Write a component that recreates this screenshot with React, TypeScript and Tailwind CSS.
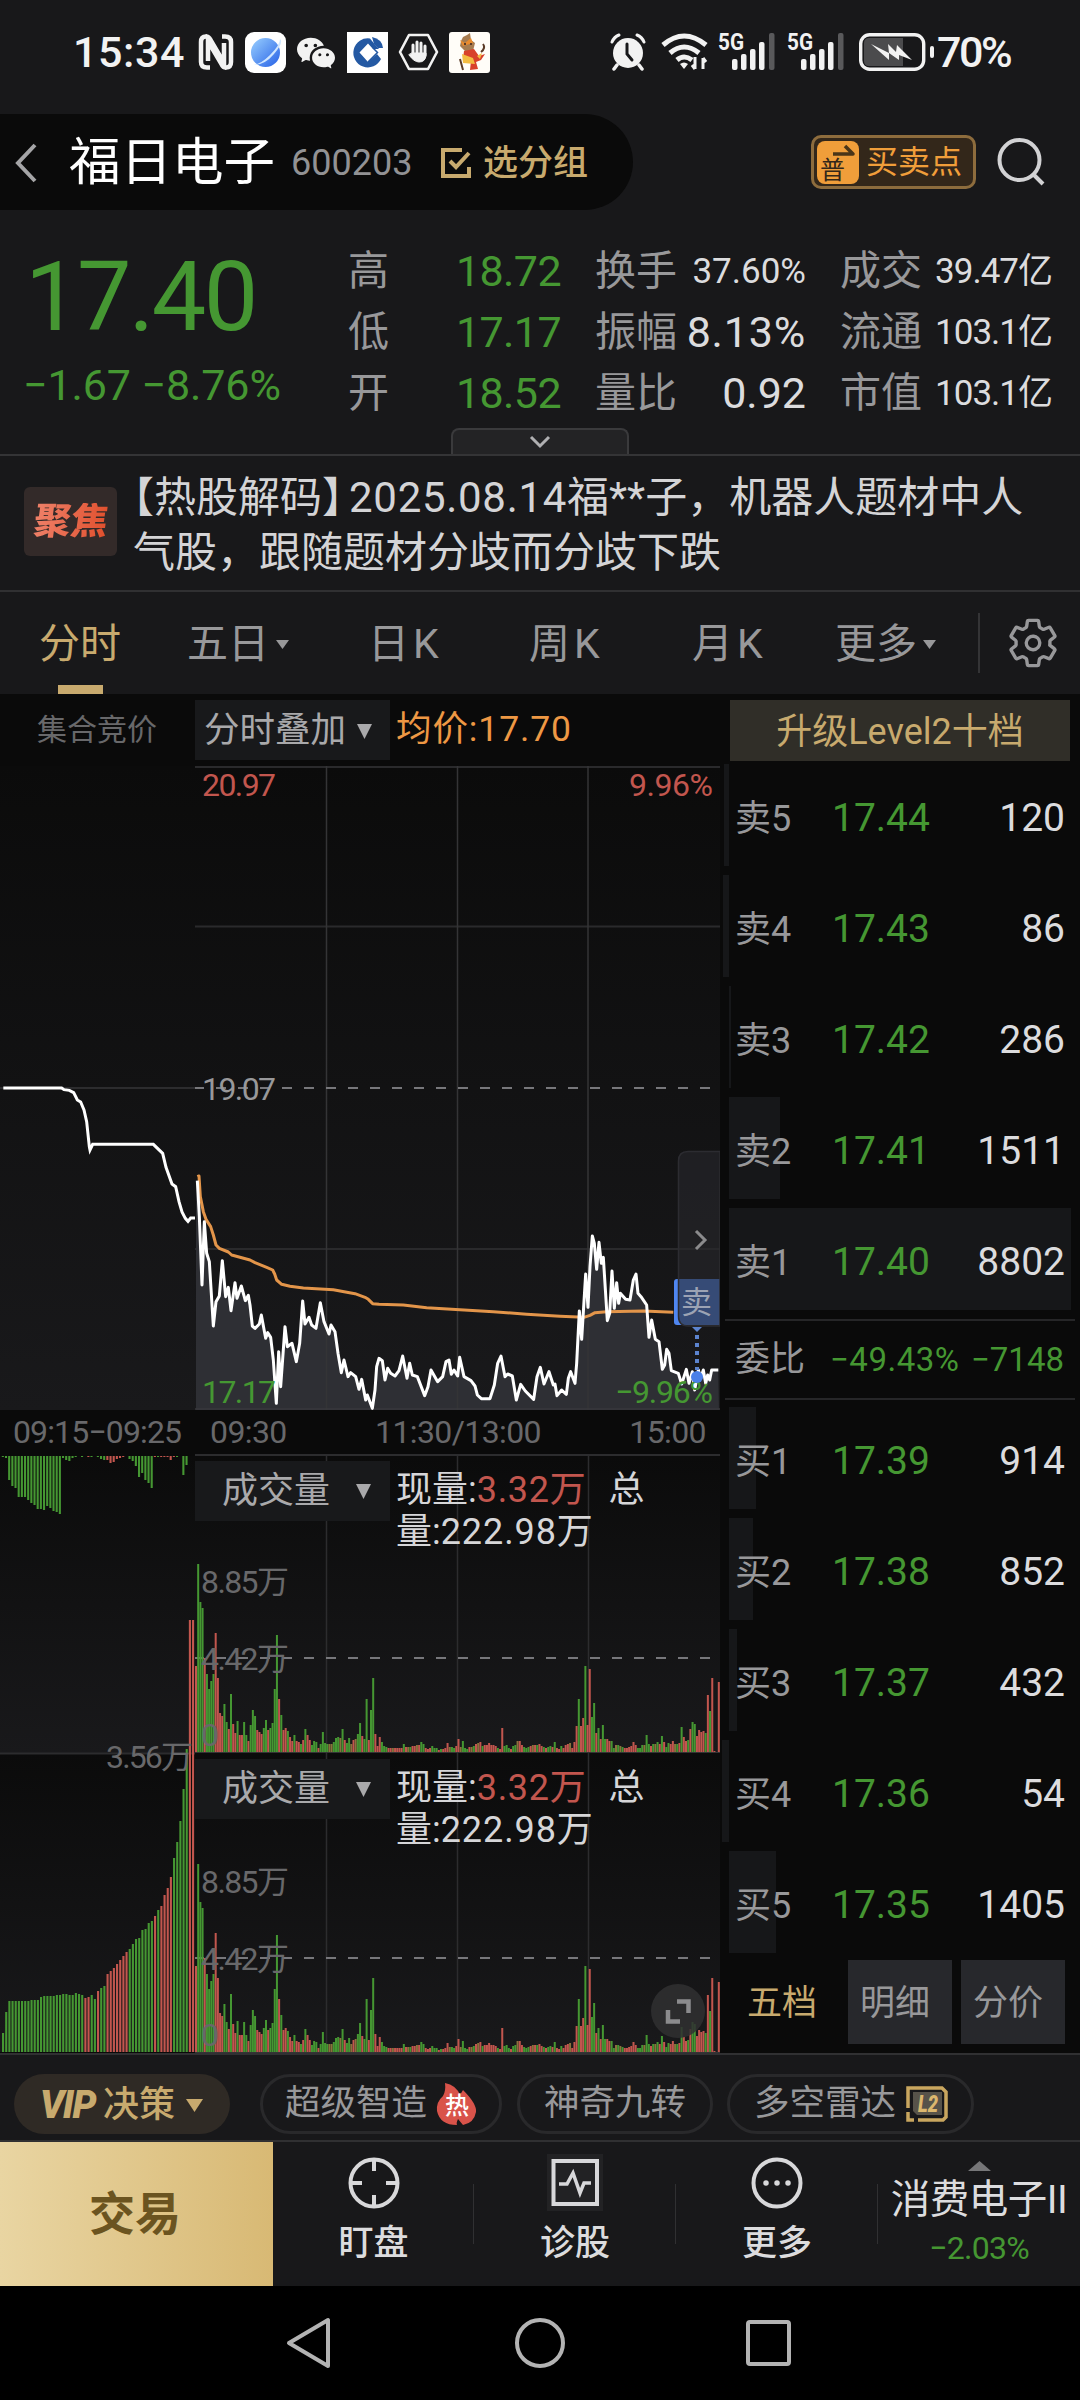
import { BsWechat } from 'react-icons/bs';
import { IoSettingsOutline } from 'react-icons/io5';

const GREEN = '#459732';
const RED = '#c2564e';

// one-minute volume bars, height + colour
const minuteBars = `86r 188g 150g 144g 94r 78g 63g 71g 78g 119r 74r 39r 36r 48g 30g 23r 58g 28r 19r 31g 17r 17r 30g 17g 11r
27g 42g 36g 22r 20r 18r 24g 32g 22r 24g 29g 63g 117g 53r 37g 22r 24r 21g 15r 11r 17g 11r 10r 8g 12r 23g 17r 12r 7g 11g 10g 4r 8g 20g 9g
8g 8m 8m 10g 14g 15g 14m 23g 12r 9g 14g 8m 12r 13m 18g 29g 16r 13g 53g 12r 42g 74g 18r 6r 15r
10g 6g 5g 4r 4r 4m 4r 4r 4r 4r 8g 5r 5m 5g 6r 6r 7m 7r 10g 8g 4r 3r 4r 6g 4g 4g 2r 3g 3r 4r 9r
5m 5g 4g 6r 13r 5m 11g 4g 3g 5r 5m 6g 8r 9m 10r 6g 7r 7r 9r 7r 7r 6r 4g 3r 24r 6g 7g 4g 3r 6g 7g 11m
11r 7r 5g 4g 5g 6r 7m 7r 7g 8r 6r 5g 4r 5g 6g 5r 10g 4r 3r 6g 4r 7r 8r 9m 4r 10r 26r 53g 26r 34r
86g 27r 83r 35g 49g 19r 24g 13r 27g 13g 13r 11r 11g 4g 7m 7g 6m 5g 4r 4r 5r 6r 10r 7r 4g 4g 7g 7m 17g
8g 6r 8g 8m 10g 8r 16g 10r 5g 9g 8r 11r 8m 8g 9r 25g 15r 11r 12g 23r 30g 28g 16r 22r 20r 21r 19g 57r 41g 74r 1r 0r 70r`;

const auctionBars = `19g 40g 51g 51g 51g 51g 51g 51g 51g 52g 52g 52g 55g 56g 56g 56g 56g 57g 57g 58g 58g 57g 57g 59g 58g 57g
54r 55r 57g 53g 61r 64g 66g 78r 81r 84r 88r 92r 96r 100r 103g 108g 113g 114g 122g 123g 129g 131g 136r 142g 146r 157r 164r 175r
194g 210g 231g 263g 303g 432r 432r`;

const auctionUnmatched = `1g 2g 24g 30g 32g 41g 41g 41g 44g 47g 49g 53g 53g 54g 50g 52g 55g 56g 58g 2g 4g 5g 2g 1g 0g 1g 0g 1r 1g
0g 1g 3g 4g 4r 7r 6r 3r 2r 1r 0r 3g 5g 10g 21g 17g 24g 27g 32g 1r 1g 1r 1r 1r 4r 1r 1g 0g 19g 9g`;

// coordinates are thirds of a pixel
const auctionLine =
  '10,114 185,114 192,119 208,121 221,128 232,150 242,156 252,180 260,215 268,290 270,300 278,283 460,283 488,310 498,352 516,402 527,410 537,455 546,486 556,505 564,514 572,504 590,504';

const priceLine = `592,392 598,500 606,705 613,515 620,610 628,635 640,828 648,755 658,738 667,632 677,740 685,712 693,782
705,698 711,745 724,708 736,752 745,736 750,765 757,828 765,835 778,822 784,795 797,865 803,848 812,862 820,930 829,1060
836,905 842,1010 855,830 862,890 876,880 889,935 899,880 908,753 915,822 927,802 935,825 948,835 961,758 972,815 987,852
993,825 1005,845 1014,910 1024,968 1032,930 1044,980 1052,968 1067,980 1077,1018 1085,988 1097,1050 1102,1035 1117,1075
1125,1020 1130,950 1137,925 1147,932 1155,990 1163,955 1172,970 1185,978 1197,962 1208,918 1221,985 1229,940 1237,975
1252,980 1274,1037 1284,1010 1293,960 1313,995 1328,980 1338,935 1347,930 1354,973 1362,960 1373,978 1379,922 1392,980
1413,992 1425,1008 1432,1035 1444,1046 1470,1046 1483,1005 1493,940 1503,918 1515,980 1523,972 1537,978 1549,1050
1562,1003 1576,1023 1601,1048 1611,980 1621,952 1632,1002 1647,965 1660,1005 1665,1002 1671,1037 1685,1020 1699,1033
1705,985 1712,965 1725,1000 1730,940 1738,783 1745,868 1757,672 1764,772 1770,650 1777,558 1783,580 1790,658 1797,577
1804,640 1810,622 1822,812 1829,790 1836,663 1843,775 1850,698 1856,760 1861,730 1877,748 1890,750 1900,690 1908,672
1914,730 1923,740 1940,765 1947,862 1955,810 1966,868 1977,875 1987,958 1994,945 2000,898 2007,910 2014,962 2035,970
2045,1002 2059,958 2067,1000 2077,965 2084,1020 2095,960 2102,985 2110,960 2117,1000 2123,975 2129,990 2135,960 2155,960`;

const averageLine = `592,380 597,378 601,440 610,485 618,508 632,530 640,555 648,585 658,595 685,606 695,615 750,630 765,638
800,652 818,660 824,672 830,690 845,703 870,709 910,714 1000,719 1065,731 1095,742 1105,748 1118,761 1137,763 1210,765
1280,773 1480,785 1580,793 1680,799 1752,802 1770,796 1785,788 1820,785 1930,783 2020,787`;

const stats = [
  { label: '高', value: '18.72', size: 'text-[43px] tracking-[-0.600px]', green: true },
  { label: '换手', value: '37.60%', size: 'text-[35px]' },
  { label: '成交', value: '39.47亿', size: 'text-[35px] tracking-[-1px]' },
  { label: '低', value: '17.17', size: 'text-[43px] tracking-[-0.600px]', green: true },
  { label: '振幅', value: '8.13%', size: 'text-[43px] tracking-[0.800px]' },
  { label: '流通', value: '103.1亿', size: 'text-[35px] tracking-[-1px]' },
  { label: '开', value: '18.52', size: 'text-[43px] tracking-[-0.600px]', green: true },
  { label: '量比', value: '0.92', size: 'text-[43px]' },
  { label: '市值', value: '103.1亿', size: 'text-[35px] tracking-[-1px]' },
];

const sells = [
  { label: '卖5', price: '17.44', qty: '120', left: 4, bar: 5 },
  { label: '卖4', price: '17.43', qty: '86', left: 3, bar: 6 },
  { label: '卖3', price: '17.42', qty: '286', left: 9, bar: 2 },
  { label: '卖2', price: '17.41', qty: '1511', left: 9, bar: 51 },
  { label: '卖1', price: '17.40', qty: '8802', left: 9, bar: 342 },
];

const buys = [
  { label: '买1', price: '17.39', qty: '914', left: 9, bar: 27 },
  { label: '买2', price: '17.38', qty: '852', left: 9, bar: 24 },
  { label: '买3', price: '17.37', qty: '432', left: 9, bar: 8 },
  { label: '买4', price: '17.36', qty: '54', left: 2, bar: 7 },
  { label: '买5', price: '17.35', qty: '1405', left: 9, bar: 47 },
];

function parseBars(data: string) {
  return data.split(/\s+/).map((item) => ({
    h: parseInt(item, 10),
    color: item.endsWith('g') ? GREEN : item.endsWith('r') ? RED : '#8a713c',
  }));
}

function Signal() {
  return (
    <svg width="59" height="48" viewBox="0 -4 59 48" className="shrink-0 overflow-visible">
      <text x="0" y="18" fontSize="23" fontWeight="700" textLength="26" lengthAdjust="spacingAndGlyphs" fill="#f2f2f2">
        5G
      </text>
      <g fill="#f2f2f2">
        <rect x="14" y="27" width="5.5" height="11" rx="2" />
        <rect x="23" y="22" width="5.5" height="16" rx="2" />
        <rect x="32" y="17" width="5.5" height="21" rx="2" />
        <rect x="41" y="10" width="5.5" height="28" rx="2" />
        <rect x="51" y="1" width="5.5" height="37" rx="2" fill="#59595b" />
      </g>
    </svg>
  );
}

function StatusBar() {
  return (
    <div className="flex h-[104px] items-center pr-[66px] pl-[73px] text-[#f2f2f2]">
      <span className="w-[114px] text-[43px] leading-none font-medium tracking-[0.600px]">15:34</span>
      <svg width="36" height="36" viewBox="0 0 36 36" className="ml-[11px]" fill="none" stroke="#f2f2f2">
        <path d="M12 33.500H9Q3 33.500 3 28V8Q3 2.500 8 2.500Q11 2.500 12.500 6L26 29V9" strokeWidth="4.500" />
        <path d="M24 2.500H27Q33 2.500 33 8V28Q33 33.500 28 33.500Q25 33.500 23.500 30L10 7V27" strokeWidth="4.500" />
      </svg>
      <svg width="41" height="41" viewBox="0 0 41 41" className="ml-[11px]">
        <defs>
          <linearGradient id="globe" x1="0" y1="0" x2="1" y2="1">
            <stop offset="0" stopColor="#9ad0ff" />
            <stop offset="1" stopColor="#2560e6" />
          </linearGradient>
        </defs>
        <rect width="41" height="41" rx="9" fill="#fff" />
        <circle cx="20.500" cy="20.500" r="14.500" fill="url(#globe)" />
        <path d="M7 33Q15 33 25 23T35 7Q39 10 29 22T7 33Z" fill="#cfe6ff" />
      </svg>
      <BsWechat size={38} className="ml-[11px]" />
      <svg width="41" height="41" viewBox="0 0 41 41" className="ml-[12px]">
        <path fill="#fff" d="M0 0h41v41H0z" />
        <path d="M23 6.500A14.500 14.500 0 1 0 34 27L30 22L21 30L12.500 20.500L21 11.500L26 17H32Q28 13 23 6.500Z" fill="#2459a3" />
        <path d="M21 30L30.500 20.500L26 16" fill="none" stroke="#2459a3" strokeWidth="1.500" />
        <path d="M25 5L27 12L31 16H36Q35 7 25 5Z" fill="#2459a3" />
      </svg>
      <svg width="41" height="38" viewBox="0 0 41 38" className="ml-[10px]" fill="none" stroke="#f2f2f2" strokeLinecap="round">
        <path d="M11 2H30L39 19L30 36H11L2 19Z" strokeWidth="2.600" strokeLinejoin="round" />
        <path d="M15 22V12M19 20V9M23 20V10M27 22V13" strokeWidth="3" />
        <path d="M14 20H28V23Q27 29 21 29Q16 29 11 22Z" fill="#f2f2f2" strokeWidth="1" />
      </svg>
      <svg width="41" height="41" viewBox="0 0 41 41" className="ml-[10px]">
        <rect width="41" height="41" rx="3" fill="#fffdf8" />
        <path d="M12 9L14 5L18 3L21 1L22 8L26 11L24 19L17 20L11 14Z" fill="#a77c50" />
        <path d="M11 8L16 11L22 6L24 11L14 14Z" fill="#e98b2e" />
        <path d="M15 19L25 17L30 24L36 22L32 28L27 30L29 37L21 38L22 29L14 27Z" fill="#d8412b" />
        <path d="M13 22L24 26L26 32L14 31ZM28 24L33 21L31 27Z" fill="#f3bc42" />
        <path d="M11 27L14 38M34 12Q37 16 32 20M15 12h2M21 12h2" stroke="#5b3b27" strokeWidth="2" fill="none" />
      </svg>

      <svg width="38" height="38" viewBox="0 0 38 38" className="ml-auto" fill="none" stroke="#f2f2f2" strokeLinecap="round">
        <circle cx="19" cy="20" r="15" fill="#f2f2f2" stroke="none" />
        <path d="M3 9Q5 4 10 2M35 9Q33 4 28 2" strokeWidth="3" />
        <path d="M8 32L5 36M30 32L33 36" strokeWidth="3.500" />
        <path d="M18 11V21L23 27" stroke="#18181a" strokeWidth="3" />
      </svg>
      <svg width="48" height="38" viewBox="0 0 48 38" className="ml-[14px]" fill="none" stroke="#f2f2f2" strokeWidth="5">
        <path d="M2 12Q23 -6 45 12" />
        <path d="M9 20Q23 8 38 20" />
        <path d="M16 27Q23 21 31 27" />
        <path d="M19 31Q23 28 27 31L23 36Z" fill="#f2f2f2" stroke="none" />
        <path d="M34 36V24M34 36L31 32M42 25V36M42 25L45 29" strokeWidth="3" />
      </svg>
      <div className="ml-[9px]">
        <Signal />
      </div>
      <div className="ml-[10px]">
        <Signal />
      </div>
      <svg width="76" height="38" viewBox="0 0 76 38" className="ml-[13px]">
        <rect x="1.700" y="1.700" width="63" height="34.600" rx="9" fill="none" stroke="#f2f2f2" strokeWidth="3.400" />
        <path d="M10 5H44V33H10Q5 33 5 28V10Q5 5 10 5Z" fill="#4b4b4d" />
        <path d="M12 11L30 20L29 11L37 19L38 12L53 27L40 22V27L30 20V27Z" fill="#f2f2f2" />
        <rect x="71" y="13" width="4" height="12" rx="2" fill="#f2f2f2" />
      </svg>
      <span className="ml-[2px] w-[77px] text-[43px] leading-none font-medium tracking-[-2.500px]">70%</span>
    </div>
  );
}

function TitleBar() {
  return (
    <div className="mt-[10px] flex h-[96px] items-center">
      <div className="flex h-full w-[633px] items-center rounded-r-full bg-[#0a0a0a] pt-[2px] pl-[15px]">
        <svg width="22" height="40" viewBox="0 0 22 40" fill="none" stroke="#a5a5a7" strokeWidth="4">
          <path d="M20 2L3 20L20 38" />
        </svg>
        <h1 className="ml-[32px] text-[51.500px] leading-none text-white">福日电子</h1>
        <span className="ml-[16px] w-[122px] text-[36px] leading-none text-[#929294]">600203</span>
        <svg width="32" height="32" viewBox="0 0 32 32" className="ml-[27px]" fill="none" stroke="#c8aa6e" strokeWidth="4">
          <path d="M22 3H3V29H29V20" />
          <path d="M10 14L16 20L29 6" />
        </svg>
        <span className="ml-[11px] text-[35px] leading-none font-medium text-[#c8aa6e]">选分组</span>
      </div>
      <div className="ml-auto flex h-[54px] w-[165px] items-center rounded-[10px] border-[3px] border-[#8d6c3d] bg-[#33271a] pl-[3px]">
        <div className="relative h-[43px] w-[42px] rounded-[8px] bg-[#f09e3a] text-[#33271a]">
          <span className="absolute bottom-[1px] left-[3px] text-[25px] leading-none">普</span>
          <svg width="24" height="14" viewBox="0 0 24 14" className="absolute top-[2px] right-[3px]">
            <path d="M1 11H21L13 3" fill="none" stroke="#4a3518" strokeWidth="3.500" strokeLinejoin="round" />
          </svg>
        </div>
        <span className="ml-[7px] text-[32px] leading-none text-[#f09e3a]">买卖点</span>
      </div>
      <svg width="52" height="52" viewBox="0 0 52 52" className="mr-[32px] ml-[20px]" fill="none" stroke="#d2d2d4" strokeWidth="4">
        <circle cx="23.500" cy="24" r="20" />
        <path d="M38 39L47 48" />
      </svg>
    </div>
  );
}

function Quote() {
  return (
    <div className="relative flex h-[246px] border-b-2 border-[#343436]">
      <div className="w-[348px] pl-[25px] text-[#459732]">
        <div className="mt-[39px] text-[97px] leading-[97px] tracking-[-2.600px]">17.40</div>
        <div className="mt-[18px] -ml-[2px] text-[43px] leading-[43px] tracking-[-0.100px] whitespace-nowrap">−1.67 −8.76%</div>
      </div>
      <div className="mt-[31px] grid h-[183px] grid-cols-[213px_211px_212px] gap-x-[34px]">
        {stats.map((s, i) => (
          <div key={i} className="flex h-[61px] items-center justify-between">
            <span className="text-[41px] leading-none whitespace-nowrap text-[#98989a]">{s.label}</span>
            <span className={`leading-none whitespace-nowrap ${s.size} ${s.green ? 'text-[#459732]' : 'text-[#dcdcde]'}`}>
              {s.value}
            </span>
          </div>
        ))}
      </div>
      <div className="absolute bottom-0 left-[451px] flex h-[26px] w-[178px] items-center justify-center rounded-t-[8px] border-2 border-b-0 border-[#3a3a3c] bg-[#232325]">
        <svg width="22" height="14" viewBox="0 0 22 14" fill="none" stroke="#b0b0b2" strokeWidth="3">
          <path d="M2 2L11 11L20 2" />
        </svg>
      </div>
    </div>
  );
}

function News() {
  return (
    <div className="flex h-[136px] border-b-2 border-[#303032]">
      <div className="mt-[31px] ml-[24px] flex h-[69px] w-[93px] items-center justify-center rounded-[6px] bg-[#332a29]">
        <span className="-skew-x-8 bg-linear-to-r from-[#ee8068] to-[#e04f2c] bg-clip-text text-[37px] leading-none font-black text-transparent">
          聚焦
        </span>
      </div>
      <p className="mt-[14px] ml-[16px] text-[42px] leading-[55px] whitespace-nowrap text-[#d4d4d6]">
        <span className="-ml-[21px]">【</span>热股解码<span className="tracking-[-21px]">】</span>
        <span className="ml-[6px] tracking-[0.700px]">2025.08.14</span>福**子，机器人题材中人
        <br />
        气股，跟随题材分歧而分歧下跌
      </p>
    </div>
  );
}

function Tabs() {
  return (
    <div className="flex h-[102px] items-center text-[41px] leading-none text-[#98989a]">
      <div className="relative flex h-full w-[160px] items-center justify-center pt-[2px] text-[#c8aa6e]">
        分时
        <i className="absolute bottom-0 h-[9px] w-[45px] bg-[#c8aa6e]" />
      </div>
      <div className="ml-[27px] flex w-[181px] items-center pt-[2px]">
        五日
        <svg width="13" height="9" className="ml-[7px]">
          <path d="M0 0H13L6.500 9Z" fill="#98989a" />
        </svg>
      </div>
      <span className="w-[161px] pt-[2px] tracking-[4px]">日K</span>
      <span className="w-[163px] pt-[2px] tracking-[4px]">周K</span>
      <span className="w-[143px] pt-[2px] tracking-[4px]">月K</span>
      <div className="flex items-center pt-[2px]">
        更多
        <svg width="13" height="9" className="ml-[6px]">
          <path d="M0 0H13L6.500 9Z" fill="#98989a" />
        </svg>
      </div>
      <div className="ml-auto h-[60px] w-[2px] bg-[#343436]" />
      <IoSettingsOutline size={54} className="mr-[20px] ml-[26px]" />
    </div>
  );
}

function VolumeInfo() {
  return (
    <div className="flex items-start pt-[5px]">
      <div className="flex h-[60px] w-[195px] items-center bg-[#18191b] pl-[27px] text-[36px] leading-none text-[#a9a9ab]">
        成交量
        <svg width="16" height="15" className="ml-[26px]">
          <path d="M0 0H15L7.500 15Z" fill="#a9a9ab" />
        </svg>
      </div>
      <p className="ml-[6px] w-[262px] pt-[8px] text-[36px] leading-[42px] text-[#d6d6d8]">
        现量:<span className="tracking-[0.700px] text-[#c2564e]">3.32万</span>
        <span className="ml-[22px]">总</span>
        <br />
        量:<span className="tracking-[0.900px]">222.98万</span>
      </p>
    </div>
  );
}

function VolumeChart({ height }: { height: number }) {
  const base = height - 1;
  const mid = base - 94;
  return (
    <svg width="525" height={height} className="absolute inset-0">
      <rect width="525" height={height} fill="url(#pane)" />
      <path d={`M131.500 0V${base}M262.500 0V${base}M393.500 0V${base}`} stroke="#2c2c2e" strokeWidth="1.500" />
      <path d={`M0 ${mid}H525`} stroke="#77777b" strokeWidth="2" strokeDasharray="10 12" strokeDashoffset="1" />
      {parseBars(minuteBars).map((b, i) => (
        <rect key={i} x={i * 2.1875} y={base - b.h} width="2" height={b.h} fill={b.color} />
      ))}
      <path d={`M0 ${base + 0.5}H525`} stroke="#343436" strokeWidth="1" />
      <g fontSize="32" fill="#68686a">
        <text x="6" y={base - 159} textLength="88">8.85万</text>
        <text x="6" y={base - 82} textLength="88">4.42万</text>
        <text x="6" y={base - 6}>0</text>
      </g>
    </svg>
  );
}

function AuctionColumn() {
  return (
    <div className="w-[195px] shrink-0">
      <div className="flex h-[72px] items-center pl-[37px] text-[30px] leading-none text-[#68686a]">集合竞价</div>
      <svg width="195" height="644" viewBox="0 0 195 644">
        <rect width="195" height="644" fill="url(#pane)" />
        <path d="M0 322H195" stroke="#2c2c2e" strokeWidth="2" />
        <g transform="translate(0 284) scale(.33333)">
          <polyline points={auctionLine} fill="none" stroke="#fff" strokeWidth="9" />
        </g>
      </svg>
      <svg width="195" height="643" viewBox="0 0 195 643">
        <text x="13" y="33" fontSize="32" textLength="169" fill="#68686a">
          09:15−09:25
        </text>
        <rect y="46" width="195" height="297" fill="url(#pane)" />
        <rect y="344" width="195" height="298" fill="url(#pane)" />
        <path d="M0 343.500H195" stroke="#2c2c2e" strokeWidth="2" />
        {parseBars(auctionUnmatched).map((b, i) => (
          <rect key={i} x={1.8 + i * 3.167} y="46" width="2.100" height={b.h} fill={b.color} />
        ))}
        {parseBars(auctionBars).map((b, i) => (
          <rect key={i} x={2 + i * 3.167} y={642 - b.h} width="2.100" height={b.h} fill={b.color} />
        ))}
        <text x="106" y="358" fontSize="32" textLength="87" fill="#68686a">
          3.56万
        </text>
      </svg>
    </div>
  );
}

function PriceChart() {
  return (
    <div className="relative h-[644px]">
      <svg width="525" height="644" viewBox="195 0 525 644">
        <defs>
          <linearGradient id="pane" x1="0" y1="0" x2="0" y2="1">
            <stop offset="0" stopColor="#0b0b0b" />
            <stop offset="1" stopColor="#19191b" />
          </linearGradient>
        </defs>
        <rect x="195" width="525" height="644" fill="url(#pane)" />
        <path d="M195 1H720M195 160.500H720M195 483H720" stroke="#2a2a2c" strokeWidth="2" />
        <g transform="translate(0 284) scale(.33333)">
          <polygon points={`588,1080 588,450 ${priceLine} 2157,1080`} fill="#2e2f34" />
        </g>
        <path d="M326.500 0V644M457.500 0V644M588 0V644" stroke="#343436" strokeWidth="1.500" />
        <path d="M195 643H720" stroke="#39393d" strokeWidth="1.500" />
        <path d="M195 322H720" stroke="#77777b" strokeWidth="2" strokeDasharray="10 12" strokeDashoffset="1" />
        <g fontSize="32">
          <text x="202" y="30" fill={RED} textLength="74">20.97</text>
          <text x="713" y="30" fill={RED} textLength="84" textAnchor="end">9.96%</text>
          <text x="202" y="334" fill="#98989a" textLength="74">19.07</text>
        </g>
        <g transform="translate(0 284) scale(.33333)" fill="none" strokeWidth="9" strokeLinejoin="round">
          <polyline points={averageLine} stroke="#e3954a" />
          <polyline points={priceLine} stroke="#fff" />
        </g>
        <g fontSize="32" fill={GREEN}>
          <text x="202" y="637" textLength="74">17.17</text>
          <text x="713" y="637" textLength="98" textAnchor="end">−9.96%</text>
        </g>
        <rect x="674" y="513" width="48" height="46" rx="3" fill="#4f86f0" />
        <path d="M692 561H702L697 566Z" fill="#5c84cf" />
        <path d="M697 569V604" stroke="#5c84cf" strokeWidth="4" strokeDasharray="4 4" />
        <circle cx="697" cy="611" r="6" fill="#4a80e8" />
        <path d="M720 385.500H688Q678.500 385.500 678.500 395V550Q678.500 560 688 560H720Z" fill="#26272b" fillOpacity=".62" stroke="#2c2c31" strokeWidth="1.500" />
        <path d="M696 465L705 474L696 483" fill="none" stroke="#8b8b8d" strokeWidth="3" />
        <text x="681" y="547" fontSize="31" fill="#9ca3b4">
          卖
        </text>
      </svg>
    </div>
  );
}

function ChartColumn() {
  return (
    <div className="w-[525px] shrink-0">
      <div className="flex h-[72px] items-start pt-[6px]">
        <div className="flex h-[60px] w-[195px] items-center bg-[#18191b] pt-[2px] pl-[9px] text-[35.500px] leading-none text-[#a9a9ab]">
          分时叠加
          <svg width="16" height="15" className="ml-[11px]">
            <path d="M0 0H15L7.500 15Z" fill="#a9a9ab" />
          </svg>
        </div>
        <span className="ml-[6px] pt-[12px] text-[35.500px] leading-none tracking-[0.900px] text-[#ee9844]">均价:17.70</span>
      </div>
      <PriceChart />
      <div className="flex h-[46px] items-center justify-between border-b-2 border-[#2c2c2e] pr-[14px] pl-[15px] text-[32px] leading-none tracking-[-0.600px] text-[#68686a]">
        <span>09:30</span>
        <span>11:30/13:00</span>
        <span>15:00</span>
      </div>
      <div className="relative h-[297px]">
        <VolumeChart height={297} />
        <div className="relative">
          <VolumeInfo />
        </div>
      </div>
      <div className="relative h-[300px]">
        <VolumeChart height={300} />
        <div className="relative pt-px">
          <VolumeInfo />
        </div>
        <svg width="54" height="54" viewBox="0 0 54 54" className="absolute right-[15px] bottom-[15px]">
          <circle cx="27" cy="27" r="27" fill="#303031" fillOpacity=".85" />
          <path d="M26 17.500H37.500V29M17 26V37.500H29" fill="none" stroke="#8b8b8d" strokeWidth="4.500" />
        </svg>
      </div>
    </div>
  );
}

function OrderRow({ row }: { row: (typeof sells)[number] }) {
  return (
    <div className="relative flex h-[102px] items-center pt-[7px] pr-[15px] pl-[15px] text-[39px] leading-none">
      <i className="absolute top-0 h-full bg-[#161719]" style={{ left: row.left, width: row.bar }} />
      <span className="relative w-[97px] text-[36px] text-[#98989a]">{row.label}</span>
      <span className="relative text-[#459732]">{row.price}</span>
      <span className="relative ml-auto text-[#dcdcde]">{row.qty}</span>
    </div>
  );
}

function OrderBook() {
  return (
    <div className="flex w-[360px] flex-col bg-[#0a0a0a]">
      <div className="mt-[6px] ml-[10px] flex h-[61px] w-[340px] items-center justify-center bg-[#302e28] pt-[2px] text-[36px] leading-none text-[#c8aa6e]">
        升级Level2十档
      </div>
      <div className="mt-[3px] flex flex-col gap-[9px]">
        {sells.map((row) => (
          <OrderRow key={row.label} row={row} />
        ))}
      </div>
      <div className="mt-[9px] mr-[5px] ml-[5px] flex h-[81px] items-center border-y-2 border-[#262628] pr-[11px] pl-[10px] text-[33px] leading-none text-[#459732]">
        <span className="w-[95px] text-[35px] text-[#98989a]">委比</span>
        <span className="tracking-[0.500px]">−49.43%</span>
        <span className="ml-auto">−7148</span>
      </div>
      <div className="mt-[7px] flex flex-col gap-[9px]">
        {buys.map((row) => (
          <OrderRow key={row.label} row={row} />
        ))}
      </div>
      <div className="mt-[7px] mr-[15px] ml-[15px] flex h-[84px] gap-[9px] text-[35px] leading-none text-[#98989a]">
        <div className="flex w-[104px] items-center pt-[2px] pl-[12px] text-[#c8aa6e]">五档</div>
        <div className="flex w-[104px] items-center bg-[#27282c] pt-[2px] pl-[12px]">明细</div>
        <div className="flex w-[104px] items-center bg-[#27282c] pt-[2px] pl-[12px]">分价</div>
      </div>
    </div>
  );
}

function Tools() {
  return (
    <div className="flex h-[89px] items-center border-y-2 border-[#303032] pt-[13px] pl-[14px] text-[35.500px] leading-none text-[#98989a]">
      <div className="flex h-[60px] w-[216px] items-center rounded-full bg-[#2f2a25] pt-[2px] pl-[26px] text-[#c8aa6e]">
        <span className="w-[63px] text-[38px] font-black tracking-[-1.500px] italic">VIP</span>
        <span className="text-[36px] font-medium">决策</span>
        <svg width="17" height="13" className="ml-[11px]">
          <path d="M0 0H17L8.500 13Z" fill="#c8aa6e" />
        </svg>
      </div>
      <div className="ml-[30px] flex h-[60px] w-[242px] items-center rounded-full border-[3px] border-[#29292b] pl-[22px]">
        超级智造
        <svg width="42" height="44" viewBox="0 0 42 44" className="ml-[9px]">
          <path d="M9 1Q20 3 24 13L27 8Q41 22 40 30Q38 41 27 43L22 37Q20 41 21 43Q4 43 1 29Q0 20 7 14Q10 9 9 1Z" fill="#d9534a" />
          <text x="9" y="32" fontSize="24" fontWeight="500" fill="#fff">
            热
          </text>
        </svg>
      </div>
      <div className="ml-[15px] flex h-[60px] w-[196px] items-center justify-center rounded-full border-[3px] border-[#29292b]">神奇九转</div>
      <div className="ml-[14px] flex h-[60px] w-[247px] items-center rounded-full border-[3px] border-[#29292b] pl-[24px]">
        多空雷达
        <svg width="42" height="36" viewBox="0 0 42 36" className="ml-[10px]">
          <path d="M12 34H37L40 31V6L36 2H2V22M2 26V34H8" fill="none" stroke="#c9a65f" strokeWidth="3.500" />
          <path d="M7 6H36V29H11L7 25Z" fill="#57534a" />
          <text x="12" y="26" fontSize="23" fontWeight="900" fontStyle="italic" textLength="20" lengthAdjust="spacingAndGlyphs" fill="#dcb76e">
            L2
          </text>
        </svg>
      </div>
    </div>
  );
}

function BottomBar() {
  return (
    <div className="flex h-[144px]">
      <div className="flex w-[273px] items-center justify-center bg-linear-to-r from-[#e9d5a2] to-[#d8b974] pr-[3px] text-[46px] leading-none font-bold text-[#6b5420]">
        交易
      </div>
      <div className="flex flex-1 text-[35px] leading-none font-medium text-[#dcdcde]">
        <div className="relative flex w-[201px] flex-col items-center pt-[14px]">
          <svg width="54" height="54" viewBox="0 0 54 54" fill="none" stroke="#d8d8da" strokeWidth="4">
            <circle cx="27" cy="27" r="23.500" />
            <path d="M27 3V15M27 39V51M3 27H15M39 27H51" />
          </svg>
          <span className="mt-[16px]">盯盘</span>
          <i className="absolute top-[42px] right-0 h-[60px] w-[1.500px] bg-[#303032]" />
        </div>
        <div className="relative flex w-[202px] flex-col items-center pt-[12px]">
          <svg width="58" height="58" viewBox="0 0 58 58" fill="none" stroke="#d8d8da" strokeWidth="4">
            <path fill="#222224" stroke="none" d="M1 0H57V57H1z" />
            <path d="M7.500 7H51V50H7.500Z" />
            <path d="M13 30H21L27 19L34 39L38 29H45" strokeWidth="3.500" />
          </svg>
          <span className="mt-[14px]">诊股</span>
          <i className="absolute top-[42px] right-0 h-[60px] w-[1.500px] bg-[#303032]" />
        </div>
        <div className="relative flex w-[202px] flex-col items-center pt-[14px]">
          <svg width="54" height="54" viewBox="0 0 54 54" fill="none" stroke="#d8d8da" strokeWidth="4">
            <circle cx="27" cy="27" r="23.500" />
            <path d="M16 27h.01M27 27h.01M38 27h.01" strokeWidth="5.500" strokeLinecap="round" />
          </svg>
          <span className="mt-[16px]">更多</span>
          <i className="absolute top-[42px] right-0 h-[60px] w-[1.500px] bg-[#303032]" />
        </div>
        <div className="flex flex-1 flex-col items-center pt-[19px] font-normal">
          <svg width="23" height="10">
            <path d="M0 10H23L11.500 0Z" fill="#767678" />
          </svg>
          <span className="mt-[9px] text-[39.500px] tracking-[-0.500px] whitespace-nowrap">消费电子II</span>
          <span className="mt-[12px] text-[32px] tracking-[-0.700px] text-[#459732]">−2.03%</span>
        </div>
      </div>
    </div>
  );
}

export default function App() {
  return (
    <div className="h-[2400px] w-[1080px] overflow-hidden bg-[#18181a] font-['Roboto','Noto_Sans_CJK_SC',sans-serif]">
      <StatusBar />
      <TitleBar />
      <Quote />
      <News />
      <Tabs />
      <div className="flex h-[1359px] bg-[#0a0a0a]">
        <AuctionColumn />
        <ChartColumn />
        <OrderBook />
      </div>
      <Tools />
      <BottomBar />
      {/* Android navigation */}
      <div className="flex h-[114px] items-center bg-black pl-[285px]">
        <svg width="510" height="56" viewBox="0 0 510 56" fill="none" stroke="#b3b3b3" strokeWidth="4" strokeLinejoin="round">
          <path d="M43 5V51L4 28Z" />
          <circle cx="255" cy="28" r="23" />
          <rect x="463" y="7" width="41" height="42" rx="2" />
        </svg>
      </div>
    </div>
  );
}
